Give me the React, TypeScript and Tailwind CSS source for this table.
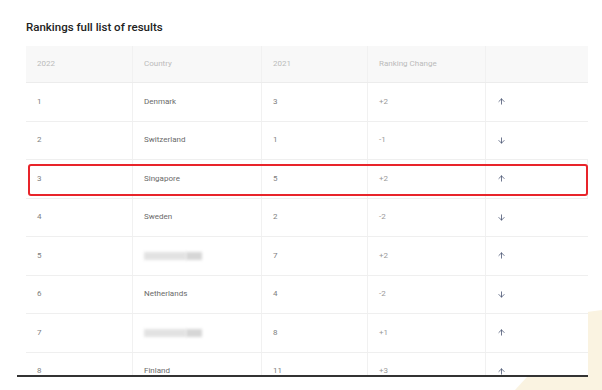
import { ArrowUp, ArrowDown } from 'lucide-react';

type Row = { rank: number; country: string; blurred?: boolean; prev: number; change: string; up: boolean };

const rows: Row[] = [
  { rank: 1, country: 'Denmark', prev: 3, change: '+2', up: true },
  { rank: 2, country: 'Switzerland', prev: 1, change: '-1', up: false },
  { rank: 3, country: 'Singapore', prev: 5, change: '+2', up: true },
  { rank: 4, country: 'Sweden', prev: 2, change: '-2', up: false },
  { rank: 5, country: '', blurred: true, prev: 7, change: '+2', up: true },
  { rank: 6, country: 'Netherlands', prev: 4, change: '-2', up: false },
  { rank: 7, country: '', blurred: true, prev: 8, change: '+1', up: true },
  { rank: 8, country: 'Finland', prev: 11, change: '+3', up: true },
];

const cols = 'grid grid-cols-[107px_129px_106px_118px_102px]';
const cell = 'flex items-center pl-[11px] border-r border-[#f1f1f1] last:border-r-0';

function Blur() {
  return (
    <div className="flex items-center">
      <div className="w-[42px] h-[8px] bg-[#e2e2e2] blur-[1.5px]" />
      <div className="w-[16px] h-[8px] bg-[#d6d6d6] blur-[1.5px]" />
    </div>
  );
}

export default function App() {
  return (
    <div className="relative w-[602px] h-[390px] bg-white overflow-hidden font-['Roboto',sans-serif]">
      <svg className="absolute right-0 bottom-0" width="90" height="80" viewBox="0 0 90 80">
        <polygon points="3,80 75,2 90,0 90,80" fill="#faf3e1" />
      </svg>

      <div className="relative pl-[17px] w-[588px]">
        <div className="h-[377px] overflow-hidden border-b-2 border-[#333]">
          <h1 className="pl-[9px] pt-[20px] h-[46px] text-[11.5px] font-medium leading-[14px] text-[#222]">
            Rankings full list of results
          </h1>
          <div className="ml-[9px] text-[8px]">
            <div className={`${cols} h-[37px] bg-[#f8f8f8] border-b border-[#ececec] text-[#bbb]`}>
              <div className={cell}>2022</div>
              <div className={cell}>Country</div>
              <div className={cell}>2021</div>
              <div className={cell}>Ranking Change</div>
              <div className={cell} />
            </div>
            {rows.map(r => (
              <div key={r.rank} className={`${cols} relative h-[38.5px] border-b border-[#efefef] bg-white text-[#808080]`}>
                <div className={cell}>{r.rank}</div>
                <div className={`${cell} text-[#6a6a6a]`}>{r.blurred ? <Blur /> : r.country}</div>
                <div className={cell}>{r.prev}</div>
                <div className={`${cell} text-[#999]`}>{r.change}</div>
                <div className={`${cell} text-[#3d4a6a]`}>
                  {r.up ? <ArrowUp size={9} strokeWidth={2} /> : <ArrowDown size={9} strokeWidth={2} />}
                </div>
                {r.rank === 3 && (
                  <div className="absolute left-[2px] right-0 top-[4px] bottom-[2px] border-2 border-[#e8242a] rounded-[3px]" />
                )}
              </div>
            ))}
          </div>
        </div>
      </div>
    </div>
  );
}
